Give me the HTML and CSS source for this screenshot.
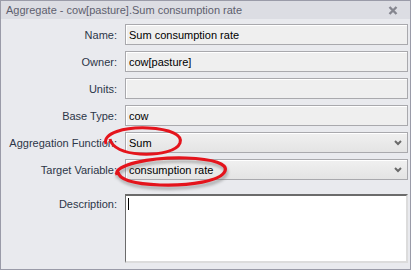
FILE: index.html
```html
<html>
  <head>
    <title>Aggregate</title>
    <meta charset="UTF-8" />
    <link rel="stylesheet" href="styles.css">
  </head>
  <body>
    <div class="window">
      <div class="titlebar">
        <div class="title">Aggregate - cow[pasture].Sum consumption rate</div>
        <svg class="close" width="10" height="9" viewBox="0 0 10 9">
          <path d="M1.5 1 L8.5 8 M8.5 1 L1.5 8" stroke="#85868f" stroke-width="2.4" />
        </svg>
      </div>
      <div class="form">
        <label class="label">Name:</label>
        <div class="field">Sum consumption rate</div>

        <label class="label">Owner:</label>
        <div class="field">cow[pasture]</div>

        <label class="label">Units:</label>
        <div class="field"></div>

        <label class="label">Base Type:</label>
        <div class="field">cow</div>

        <label class="label">Aggregation Function:</label>
        <div class="field select">
          <span>Sum</span>
          <svg class="chevron" width="8" height="6" viewBox="0 0 8 6">
            <path d="M1 1 L4 4 L7 1" fill="none" stroke="#6a6a6a" stroke-width="2" />
          </svg>
        </div>

        <label class="label">Target Variable:</label>
        <div class="field select">
          <span>consumption rate</span>
          <svg class="chevron" width="8" height="6" viewBox="0 0 8 6">
            <path d="M1 1 L4 4 L7 1" fill="none" stroke="#6a6a6a" stroke-width="2" />
          </svg>
        </div>

        <label class="label desc-label">Description:</label>
        <div class="textarea"><span class="caret"></span></div>
      </div>

      <!-- hand drawn marks over the form -->
      <svg class="marks" width="411" height="270" viewBox="0 0 411 270">
        <defs>
          <filter id="shadow" x="-20%" y="-50%" width="140%" height="200%">
            <feGaussianBlur stdDeviation="1.6" />
          </filter>
        </defs>
        <path d="M117 175 C113 165 150 157 186 158 C214 159 228 164 225 171 C221 181 190 186 160 185 C134 184 119 180 118 172"
          fill="none" stroke="#666" stroke-width="3.5" opacity="0.45" filter="url(#shadow)" transform="translate(1 3)" />
        <path d="M106 144 C102 133 125 127 148 128 C170 129 183 135 180 143 C177 151 160 155 140 154 C124 153 112 148 110 139"
          fill="none" stroke="#e4141c" stroke-width="3" />
        <path d="M117 175 C113 165 150 157 186 158 C214 159 228 164 225 171 C221 181 190 186 160 185 C134 184 119 180 118 172"
          fill="none" stroke="#e4141c" stroke-width="3.2" />
      </svg>
    </div>
  </body>
</html>
```

FILE: styles.css
```css
html,
body {
  margin: 0;
  padding: 0;
  background: #e9eaee;
}

.window {
  position: relative;
  width: 409px;
  height: 268px;
  border: 1px solid #9a9ba8;
  background: #e9eaee;
  font-family: "Liberation Sans", Arial, sans-serif;
  font-size: 11px;
  overflow: hidden;
}

.titlebar {
  height: 18px;
  display: flex;
  align-items: center;
  justify-content: space-between;
  background: #dcdde3;
  padding: 0 12px 0 5px;
}

.title {
  color: #5e5f6e;
  font-size: 11px;
  white-space: nowrap;
}

.form {
  display: grid;
  grid-template-columns: 116px 1fr;
  column-gap: 8px;
  row-gap: 6px;
  grid-auto-rows: 21px;
  padding: 5px 2px 0 0;
}

.label {
  display: flex;
  align-items: center;
  justify-content: flex-end;
  color: #2c3648;
  white-space: nowrap;
}

.field {
  display: flex;
  align-items: center;
  box-sizing: border-box;
  height: 21px;
  padding: 0 3px;
  border: 1px solid #a9a9ad;
  box-shadow: inset 1px 1px 0 #fff;
  background: #efefef;
  color: #000;
}

.select {
  justify-content: space-between;
  background: linear-gradient(#f0f0f0, #e4e4e4);
  padding-right: 5px;
}

.desc-label {
  margin-top: 8px;
  align-items: flex-start;
  padding-top: 4px;
}

.textarea {
  margin-top: 8px;
  height: 69px;
  box-sizing: border-box;
  background: #fff;
  border-top: 2px solid #6b6b6b;
  border-left: 1px solid #6b6b6b;
  border-right: 2px solid #dcdcdc;
  border-bottom: 2px solid #dcdcdc;
  padding: 2px 2px;
}

.caret {
  display: block;
  width: 1px;
  height: 12px;
  background: #000;
}

.marks {
  position: absolute;
  top: -1px;
  left: -1px;
  pointer-events: none;
}
```
